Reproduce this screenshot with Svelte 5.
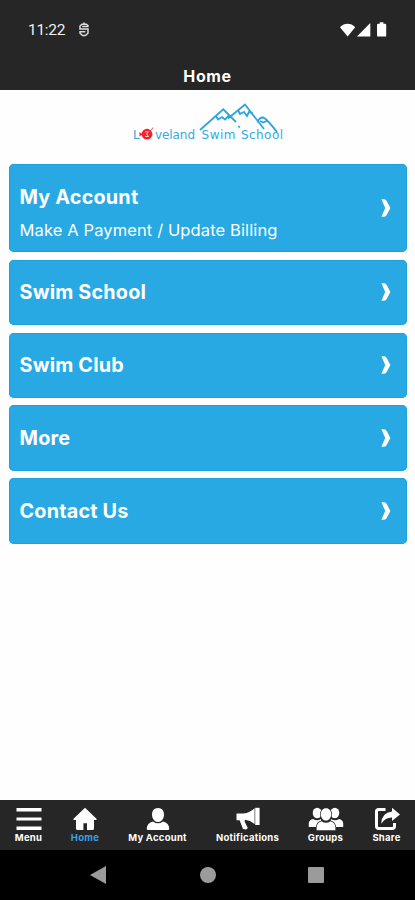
<!-- App.svelte -->
<script lang="ts">
	type MenuCard = { title: string; subtitle?: string };

	const cards: MenuCard[] = [
		{ title: 'My Account', subtitle: 'Make A Payment / Update Billing' },
		{ title: 'Swim School' },
		{ title: 'Swim Club' },
		{ title: 'More' },
		{ title: 'Contact Us' }
	];

	const tabs = [
		{ id: 'menu', label: 'Menu' },
		{ id: 'home', label: 'Home' },
		{ id: 'account', label: 'My Account' },
		{ id: 'notifications', label: 'Notifications' },
		{ id: 'groups', label: 'Groups' },
		{ id: 'share', label: 'Share' }
	];

	let active = $state('home');
</script>

<div class="screen">
	<header>
		<div class="status-bar">
			<span class="time">11:22</span>
			<svg class="app-icon" width="12" height="16" viewBox="0 0 12 16">
				<path d="M10.6 4.2L8.4 2.2H4L2 4V7H10V11.2L7.4 13.6H4.6L2 11.2V9.8H7.4M4.2 4.6H10.6M6 .6V2.2" />
			</svg>
			<svg class="signals" width="50" height="18" viewBox="0 0 50 18">
				<path d="M1 6.2C5.2 1.6 12 1.6 16.2 6.2L8.6 15.6Z" />
				<path d="M31.3 2V15.4H18Z" />
				<path d="M40.8 1.2H44.4V2.8H46.2Q47.2 2.8 47.2 4V14.4Q47.2 15.6 46 15.6H39.2Q38 15.6 38 14.4V4Q38 2.8 39.2 2.8H40.8Z" />
			</svg>
		</div>
		<h1>Home</h1>
	</header>

	<main>
		<svg class="logo" width="155" height="42" viewBox="130 101 155 42">
			<g class="mountains">
				<path d="M200 130L223.3 109.3L236 122M228 118.5L245 104.5L264 129M257.5 122.5Q259 117.5 263 117.5Q266 118 277 132" />
				<path d="M216 116L218 119.5L222 117L225 119.5L229 115.5M238 110L240 114L244 112L247 116L249 112L253 113.5M260 121L263 122.5L267 121" />
				<path d="M238.2 126.3L240 127.2" />
			</g>
			<g class="logo-text">
				<text x="133" y="139" textLength="6">L</text>
				<text x="155" y="139" textLength="40">veland</text>
				<text x="201.5" y="139" textLength="34">Swim</text>
				<text x="241" y="139" textLength="42">School</text>
			</g>
			<circle cx="147" cy="134.2" r="5.4" fill="#f3222b" />
			<path d="M139.5 132L142.5 134.2L139.5 136.5Z" fill="#f3222b" />
			<path d="M145 131.8H148.5L146.5 134L148.5 136.5H145" class="fish-mark" />
			<path d="M151 130.5L153 127.5" stroke="#f3222b" stroke-width="0.8" />
		</svg>

		<div class="cards">
			{#each cards as card}
				<button class="card" class:tall={card.subtitle}>
					<span class="card-text">
						<span class="title">{card.title}</span>
						{#if card.subtitle}
							<span class="subtitle">{card.subtitle}</span>
						{/if}
					</span>
					<svg class="chevron" width="10" height="18" viewBox="0 0 10 18">
						<path d="M.4 .2H3.2Q4.8 .2 5.8 2.2L9.4 9L5.8 15.8Q4.8 17.8 3.2 17.8H.4L4.2 9Z" />
					</svg>
				</button>
			{/each}
		</div>
	</main>

	<nav class="tabs">
		{#each tabs as tab}
			<button class="tab" class:active={active === tab.id} onclick={() => (active = tab.id)}>
				<svg width="36" height="24" viewBox="0 0 36 24">
					{#if tab.id === 'menu'}
						<path d="M5.5 1H30.5V4.4H5.5ZM5.5 10.4H30.5V13.4H5.5ZM5.5 19.6H30.5V23H5.5Z" />
					{:else if tab.id === 'home'}
						<path d="M18 .8L24 6.4L29.5 11.8V13H27V21.5Q27 23 25.5 23H20V16.2H16.4V23H10.5Q9 23 9 21.5V13H6.5V11.8Z" />
					{:else if tab.id === 'account'}
						<path d="M18 1C21.8 1 24 3.8 24 7.4C24 11.4 21.4 15 18 15S12 11.4 12 7.4C12 3.8 14.2 1 18 1Z" />
						<path d="M13 14.4Q18 18.2 23 14.4Q29 16 29.3 21.5Q29.3 23 28 23H8Q6.7 23 6.7 21.5Q7 16 13 14.4Z" />
					{:else if tab.id === 'notifications'}
						<path d="M6.5 6.4H13.5Q20 5.8 24.6 1.2V17Q20 13.4 15 12.8L14.6 14.6L17.8 21L16.2 22.6L13 22L9.6 13.2H6.5Z" />
						<path d="M25.2 .8H29.6V18H25.2Z" />
					{:else if tab.id === 'groups'}
						<ellipse cx="9.2" cy="6" rx="4.5" ry="5.3" />
						<ellipse cx="26.8" cy="6" rx="4.5" ry="5.3" />
						<path d="M5 12Q9 14.4 13 12L14 20H.8V16Q1.2 12.8 5 12ZM23 12Q27 14.4 31 12Q34.8 12.8 35.2 16V20H22Z" />
						<path
							class="outlined"
							d="M18 1.2C21.2 1.2 23.2 3.8 23.2 7.2S20.8 13.6 18 13.6S12.8 10.6 12.8 7.2S14.8 1.2 18 1.2ZM13.5 14.2Q18 17.4 22.5 14.2Q27.2 15.5 27.4 20.5V23.3H8.6V20.5Q8.8 15.5 13.5 14.2Z"
						/>
					{:else}
						<path class="line" d="M16.5 2.5H9.7Q7.5 2.5 7.5 4.7V19.3Q7.5 21.5 9.7 21.5H23.3Q25.5 21.5 25.5 19.3V16" />
						<path d="M23 .8L31 7.4L23 14V10.4Q16.5 10.2 12.2 16.8Q12.4 6 23 4.6Z" />
					{/if}
				</svg>
				<span>{tab.label}</span>
			</button>
		{/each}
	</nav>

	<div class="system-nav">
		<svg width="18" height="20" viewBox="0 0 18 20"><path d="M0 10L16 1V19Z" /></svg>
		<svg width="18" height="20" viewBox="0 0 18 20"><circle cx="9" cy="10" r="8" /></svg>
		<svg width="18" height="20" viewBox="0 0 18 20"><rect x="1" y="2" width="16" height="16" rx="1" /></svg>
	</div>
</div>

<style>
	:global(body) {
		margin: 0;
		background: #fff;
	}
	.screen {
		width: 415px;
		height: 900px;
		display: flex;
		flex-direction: column;
		overflow: hidden;
		background: #fefefe;
		font-family: Inter, 'Liberation Sans', sans-serif;
	}
	button {
		border: none;
		padding: 0;
		margin: 0;
		background: none;
		color: inherit;
		font: inherit;
		cursor: pointer;
	}
	svg {
		display: block;
		flex: none;
	}
	header {
		height: 90px;
		background: #262626;
		color: #fff;
		flex: none;
	}
	.status-bar {
		height: 60px;
		box-sizing: border-box;
		display: flex;
		align-items: center;
		padding: 0 26px 0 28px;
	}
	.time {
		width: 50px;
		font-family: Roboto, sans-serif;
		font-size: 15.5px;
		line-height: 20px;
		letter-spacing: -0.3px;
		color: #eee;
	}
	.app-icon {
		fill: none;
		stroke: #ddd;
		stroke-width: 1.5;
	}
	.signals {
		margin-left: auto;
		fill: #fff;
	}
	h1 {
		margin: 0;
		font-size: 16px;
		font-weight: 700;
		line-height: 32px;
		text-align: center;
		letter-spacing: 0.6px;
	}
	main {
		flex: 1;
		padding: 11px 8.5px 0 9px;
	}
	.logo {
		margin-left: 121px;
		fill: none;
	}
	.mountains {
		stroke: #2ba6dc;
		stroke-width: 1.8;
	}
	.logo-text {
		fill: #35a9df;
		font-family: 'DejaVu Sans', sans-serif;
		font-size: 12px;
	}
	.fish-mark {
		stroke: #ffc4c4;
		stroke-width: 1;
	}
	.cards {
		display: flex;
		flex-direction: column;
		gap: 7.7px;
		margin-top: 21px;
	}
	.card {
		height: 65.2px;
		box-sizing: border-box;
		display: flex;
		align-items: center;
		justify-content: space-between;
		padding: 0 15.5px 0 10.5px;
		border-radius: 5px;
		background: #29a9e3;
		box-shadow: inset 0 0 0 1px #1da2df;
		color: #fff;
		text-align: left;
	}
	.card.tall {
		height: 88px;
	}
	.card-text {
		display: flex;
		flex-direction: column;
		gap: 9px;
	}
	.title {
		font-size: 19.8px;
		font-weight: 700;
		line-height: 26px;
		letter-spacing: 0.2px;
	}
	.subtitle {
		font-size: 16.5px;
		line-height: 22px;
		letter-spacing: 0.12px;
	}
	.tall .card-text {
		padding-top: 8px;
	}
	.chevron {
		fill: #fff;
	}
	.tabs {
		height: 50px;
		flex: none;
		display: grid;
		grid-template-columns: 57px 56px 89px 91px 65px 57px;
		background: #262626;
		color: #fff;
	}
	.tab {
		display: flex;
		flex-direction: column;
		align-items: center;
		padding-top: 7px;
	}
	.tab svg {
		fill: #fff;
	}
	.tab span {
		margin-top: 1px;
		font-size: 9.5px;
		font-weight: 700;
		line-height: 12px;
		letter-spacing: 0.25px;
		white-space: nowrap;
	}
	.tab.active span {
		color: #3b9fe6;
	}
	.tab .line {
		fill: none;
		stroke: #fff;
		stroke-width: 3;
	}
	.tab .outlined {
		stroke: #262626;
		stroke-width: 1.4;
		paint-order: stroke;
	}
	.system-nav {
		height: 50px;
		flex: none;
		display: flex;
		align-items: center;
		justify-content: center;
		gap: 90.5px;
		background: #000;
		fill: #9b9b9b;
	}
</style>
